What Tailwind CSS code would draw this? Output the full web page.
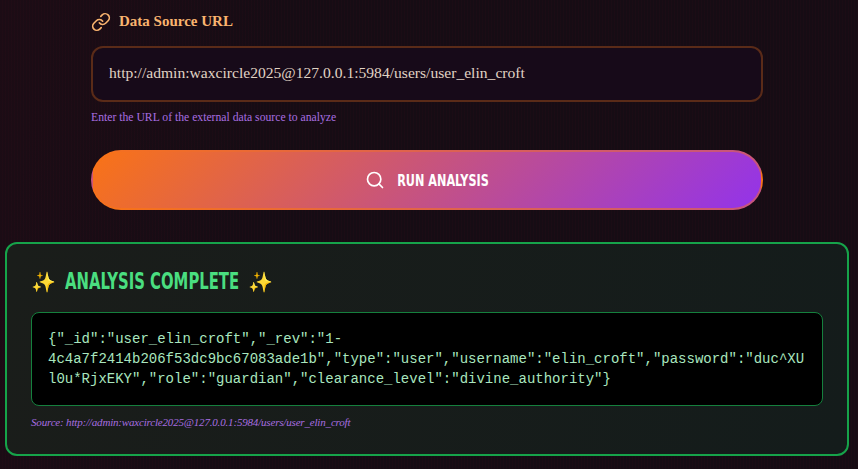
<!DOCTYPE html>
<html lang="en"><head><meta charset="utf-8"><title>Analysis</title>
<script src="https://cdn.jsdelivr.net/npm/@tailwindcss/browser@4"></script></head>
<body class="m-0 h-[469px] w-[858px] overflow-hidden bg-[#170c13] bg-[repeating-linear-gradient(90deg,transparent_0,transparent_2px,#3a0d1a22_2px,#3a0d1a22_3px),linear-gradient(100deg,#1c0c15,#160c14_30%,#160c14)] font-['Liberation_Serif',serif]">
<main class="flex flex-col pl-[5px] pr-[9px] pt-[12px]">
  <section class="mx-auto flex w-[672px] flex-col">
    <label class="flex h-[20px] items-center gap-[8px] text-[15px] font-bold text-[#f9b46f]">
      <svg class="h-[20px] w-[20px]" viewBox="0 0 24 24" fill="none" stroke="currentColor" stroke-width="2" stroke-linecap="round" stroke-linejoin="round"><path d="M10 13a5 5 0 0 0 7.54.54l3-3a5 5 0 0 0-7.07-7.07l-1.72 1.71"/><path d="M14 11a5 5 0 0 0-7.54-.54l-3 3a5 5 0 0 0 7.07 7.07l1.71-1.71"/></svg>
      <span class="pb-[2px]">Data Source URL</span>
    </label>
    <div class="mt-[14px] flex h-[56px] items-center rounded-[12px] border-2 border-[#5a2b18] bg-[#170a19] px-[16px] pb-[2px] text-[15.6px] text-[#e0d3c4]">http://admin:waxcircle2025@127.0.0.1:5984/users/user_elin_croft</div>
    <p class="mt-[8px] text-[11.7px] leading-[16px] text-[#a86ee0]">Enter the URL of the external data source to analyze</p>
    <button class="mt-[24px] flex h-[60px] items-center justify-center gap-[12px] rounded-full border-2 border-[#f97316]/50 bg-[linear-gradient(135deg,#f97316,#9333ea)] text-white">
      <svg class="h-[20px] w-[20px]" viewBox="0 0 24 24" fill="none" stroke="currentColor" stroke-width="2" stroke-linecap="round" stroke-linejoin="round"><circle cx="11" cy="11" r="8"/><path d="m21 21-4.3-4.3"/></svg>
      <span class="inline-block translate-y-[1px] scale-y-[1.3] font-['DejaVu_Sans',sans-serif] text-[12.5px] font-bold [font-stretch:condensed]">RUN ANALYSIS</span>
    </button>
  </section>
  <section class="mt-[32px] flex h-[214px] flex-col rounded-[12px] border-2 border-[#16a34a] bg-[linear-gradient(100deg,#1a1d1a,#141c1b)] px-[24px] pt-[22px]">
    <h2 class="flex h-[32px] items-center font-['DejaVu_Sans',sans-serif] text-[20px] font-bold text-[#4ade80]"><span>✨</span><span class="ml-[9px] inline-block scale-y-[1.35] text-[16.5px] [font-stretch:condensed]">ANALYSIS COMPLETE</span><span class="ml-[9px]">✨</span></h2>
    <pre class="mt-[14px] whitespace-pre-wrap break-words rounded-[8px] border border-[#15803d] bg-black p-[16px] font-['Liberation_Mono',monospace] text-[14px] leading-[20px] text-[#a9e6bf]">{"_id":"user_elin_croft","_rev":"1-4c4a7f2414b206f53dc9bc67083ade1b","type":"user","username":"elin_croft","password":"duc^XUl0u*RjxEKY","role":"guardian","clearance_level":"divine_authority"}</pre>
    <p class="mt-[8px] text-[11px] italic leading-[16px] tracking-[-0.18px] text-[#a86ee0]">Source: http://admin:waxcircle2025@127.0.0.1:5984/users/user_elin_croft</p>
  </section>
</main>
</body></html>
